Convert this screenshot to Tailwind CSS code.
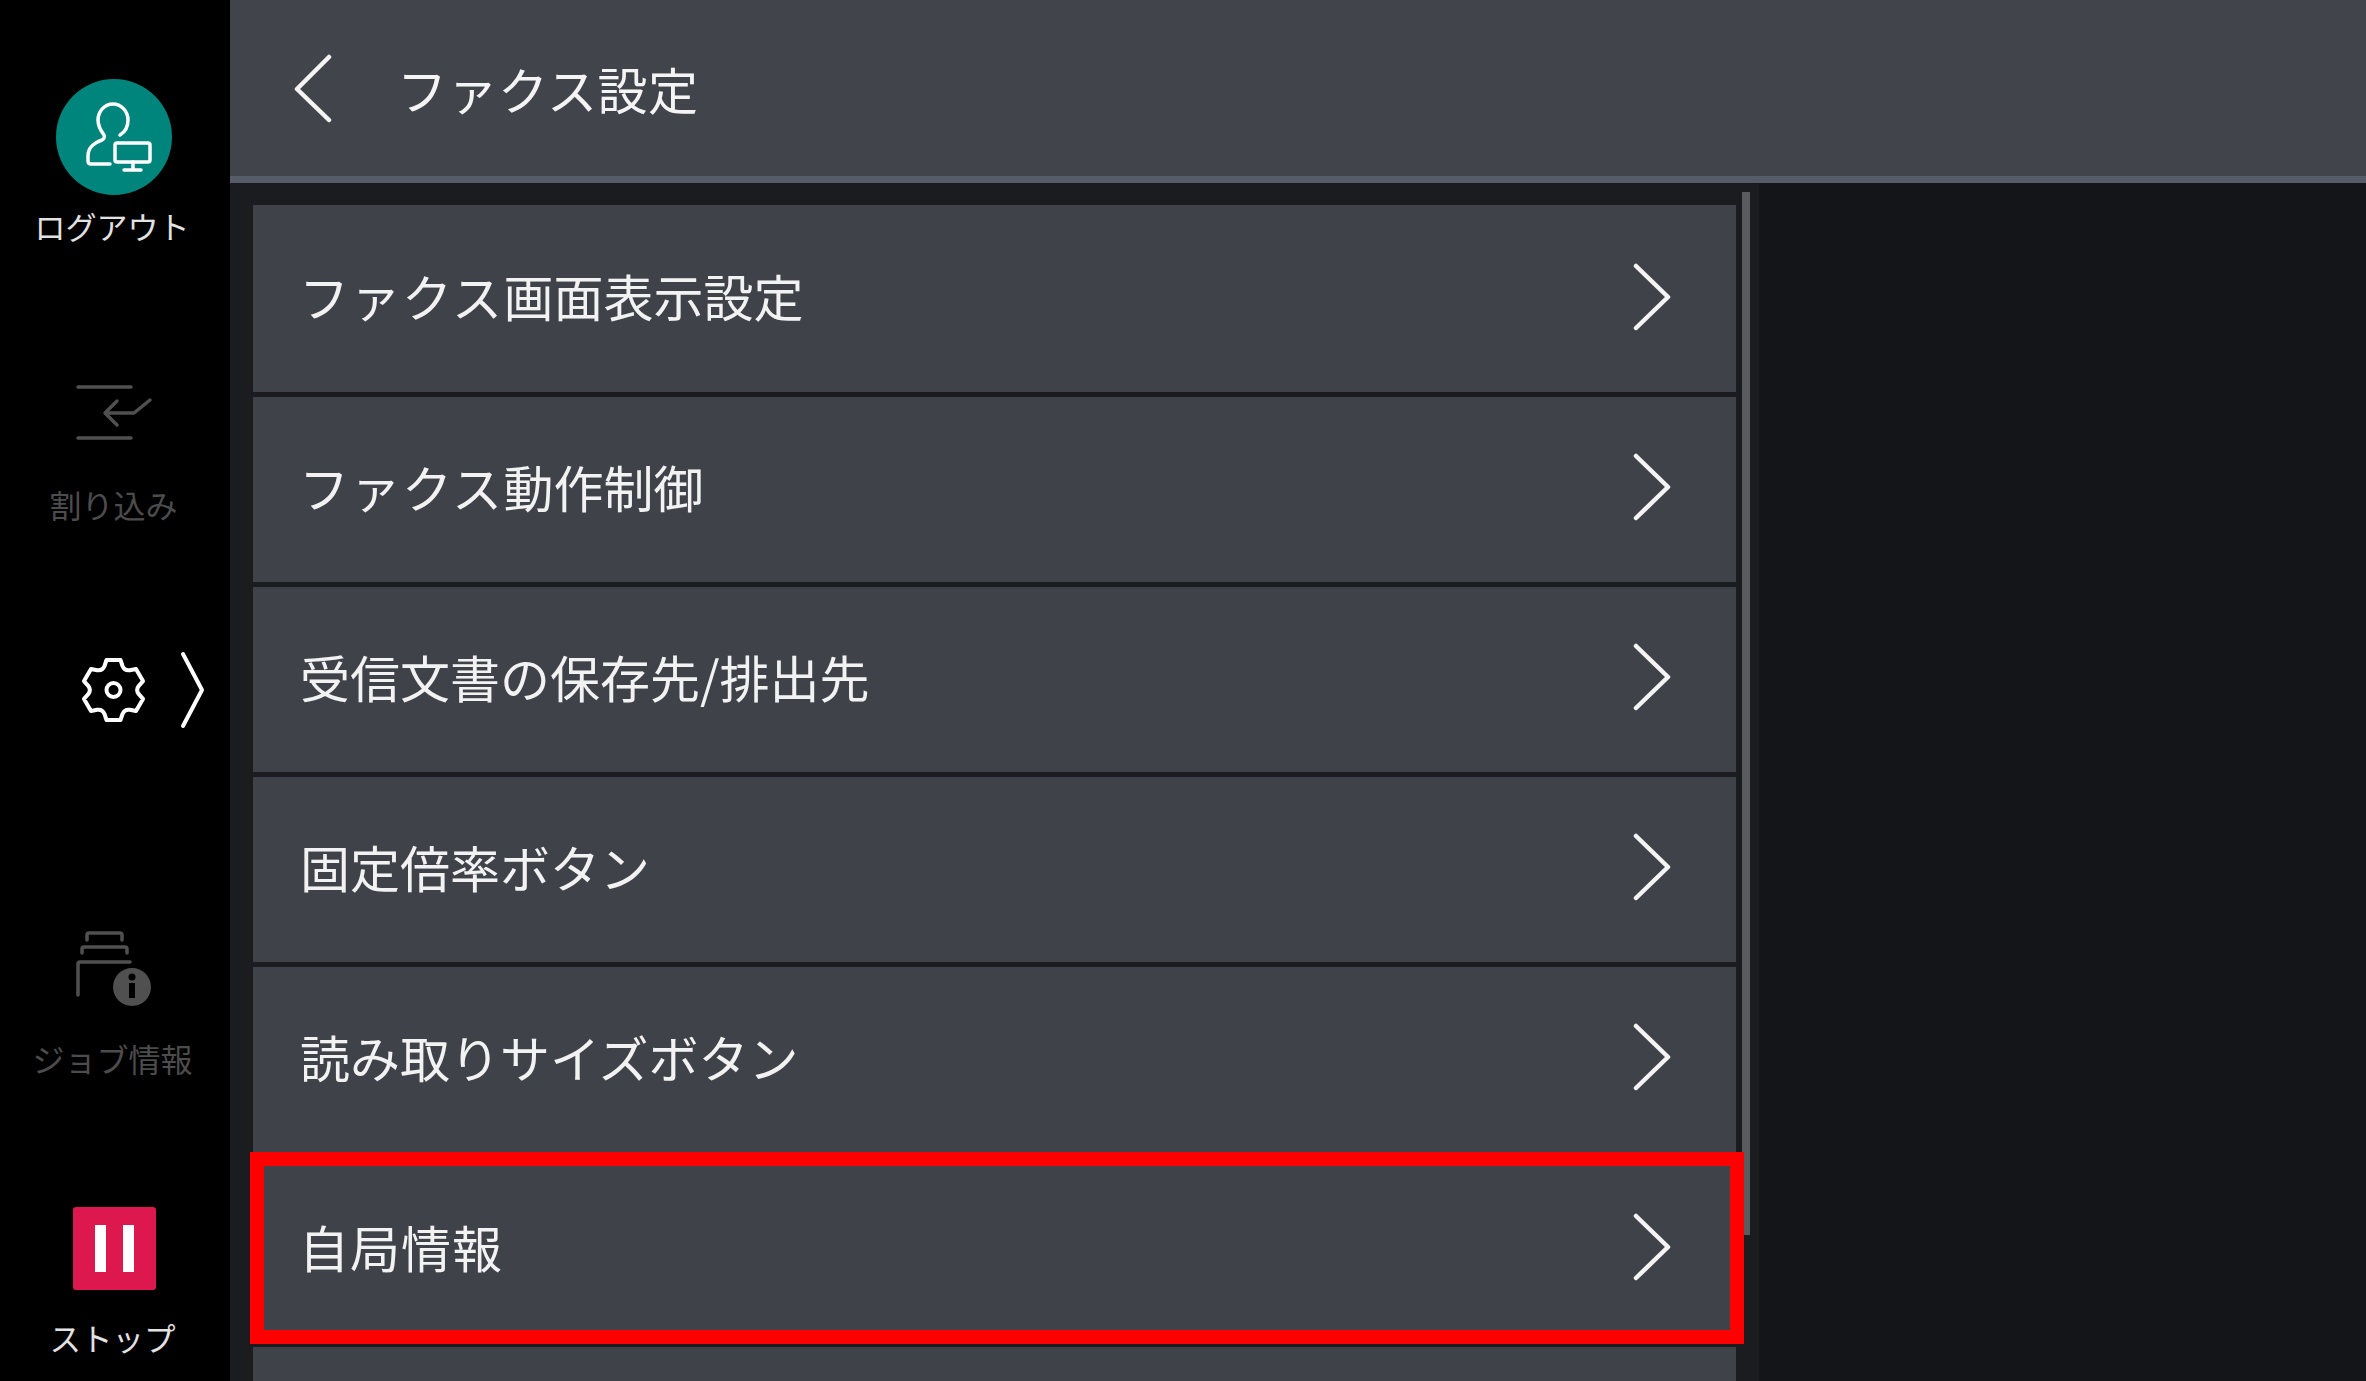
<!DOCTYPE html>
<html lang="ja">
<head>
<meta charset="utf-8">
<script src="https://cdn.jsdelivr.net/npm/@tailwindcss/browser@4"></script>
</head>
<body class="m-0 overflow-hidden bg-black">
<div class="relative flex h-[1381px] w-[2366px] overflow-hidden font-['Noto_Sans_CJK_JP','Noto_Sans',sans-serif]">

  <nav class="flex w-[230px] shrink-0 flex-col items-center bg-black pt-[79px] pr-[2px] text-[31px] leading-[40px]">
    <svg class="h-[116px] w-[116px] shrink-0" viewBox="56 79 116 116" fill="none" stroke="#fff" stroke-width="3.5" stroke-linecap="round" stroke-linejoin="round">
      <circle cx="114" cy="137" r="58" fill="#00857d" stroke="none"/>
      <path d="M120 135c5-3 8-9 8-15 0-9-7-16-15-16s-15 7-15 16c0 6 3 11 6 15 1 2 0 4-2 5-8 3-14 7-14 16v5c0 2 1 3 3 3h19"/>
      <rect x="115" y="143" width="35" height="19" rx="2"/>
      <path d="M133 162v8M124 170h17"/>
    </svg>
    <span class="mt-[11px] mr-[4px] text-[#e2e2e2]">ログアウト</span>

    <svg class="mt-[134px] h-[65px] w-[90px] shrink-0" viewBox="69 380 90 65" fill="none" stroke="#505050" stroke-width="3.5" stroke-linecap="round" stroke-linejoin="round">
      <path d="M78 387h53M78 438h53M150 400l-16 13h-29M117 401l-12 12 12 12"/>
    </svg>
    <span class="mt-[39px] mr-[1px] text-[32px] text-[#4c4c4c]">割り込み</span>

    <svg class="mt-[126px] h-[80px] w-[230px] shrink-0" viewBox="-1 650 230 80" fill="none" stroke="#fff" stroke-width="4" stroke-linecap="round" stroke-linejoin="round">
      <g transform="translate(113.5 690)">
        <path d="M-7 -30H7L9 -24Q11 -19 16.3 -19.8L22.5 -21L29.5 -8.9L25.3 -4.2Q22 0 25.3 4.2L29.5 8.9L22.5 21L16.3 19.8Q11 19 9 24L7 30H-7L-9 24Q-11 19 -16.3 19.8L-22.5 21L-29.5 8.9L-25.3 4.2Q-22 0 -25.3 -4.2L-29.5 -8.9L-22.5 -21L-16.3 -19.8Q-11 -19 -9 -24Z"/>
        <circle r="7"/>
      </g>
      <path d="M183 654l19 36-19 36"/>
    </svg>

    <svg class="mt-[195px] h-[85px] w-[90px] shrink-0" viewBox="69 925 90 85" fill="none" stroke="#505050" stroke-width="3.5" stroke-linecap="round" stroke-linejoin="round">
      <path d="M87 940v-5q0-2 2-2h31q2 0 2 2v5M82 953v-4q0-2 2-2h41q2 0 2 2v4M78 995v-31q0-2 2-2h50"/>
      <circle cx="132" cy="987" r="19" fill="#505050" stroke="none"/>
      <circle cx="132" cy="977" r="3.5" fill="#000" stroke="none"/>
      <rect x="129" y="983" width="6" height="15" fill="#000" stroke="none"/>
    </svg>
    <span class="mt-[28px] mr-[3px] text-[32px] text-[#4c4c4c]">ジョブ情報</span>

    <div class="mt-[129px] flex h-[83px] w-[83px] shrink-0 items-center justify-center gap-[17px] rounded-[3px] bg-[#dc184e]">
      <span class="h-[47px] w-[11px] bg-white"></span>
      <span class="h-[47px] w-[11px] bg-white"></span>
    </div>
    <span class="mt-[27px] mr-[3px] text-[31.5px] text-[#e2e2e2]">ストップ</span>
  </nav>

  <main class="flex min-w-0 flex-1 flex-col">
    <header class="flex h-[183px] shrink-0 items-center border-b-[7px] border-[#565c6a] bg-[#42444b]">
      <svg class="ml-[64px] h-[69px] w-[38px]" viewBox="294 53 38 69" fill="none" stroke="#f4f4f4" stroke-width="4.5" stroke-linecap="round" stroke-linejoin="round">
        <path d="M329 56L297 88L329 119"/>
      </svg>
      <h1 class="ml-[65px] text-[50px] leading-none font-normal tracking-[0.5px] text-[#f4f4f4]">ファクス設定</h1>
    </header>

    <div class="flex min-h-0 flex-1">
      <div class="flex w-[1529px] shrink-0 flex-col gap-[5px] overflow-hidden bg-[#1b1c1f] pt-[22px] pl-[23px]">
        <div class="flex h-[187px] w-[1483px] shrink-0 items-center justify-between bg-[#404249] pr-[65px] pl-[46px] text-[50px] text-[#f2f2f2]"><span class="mb-[6px]"><span class="tracking-[1.5px]">ファクス</span>画面表示設定</span><svg class="mb-[4px] h-[68px] w-[38px]" viewBox="0 0 38 68" fill="none" stroke="#f4f4f4" stroke-width="4.5" stroke-linecap="round" stroke-linejoin="round"><path d="M3 3L35 34L3 65"/></svg></div>
        <div class="flex h-[185px] w-[1483px] shrink-0 items-center justify-between bg-[#404249] pr-[65px] pl-[46px] text-[50px] text-[#f2f2f2]"><span class="mb-[6px]"><span class="tracking-[1.5px]">ファクス</span>動作制御</span><svg class="mb-[6px] h-[68px] w-[38px]" viewBox="0 0 38 68" fill="none" stroke="#f4f4f4" stroke-width="4.5" stroke-linecap="round" stroke-linejoin="round"><path d="M3 3L35 34L3 65"/></svg></div>
        <div class="flex h-[185px] w-[1483px] shrink-0 items-center justify-between bg-[#404249] pr-[65px] pl-[46px] text-[50px] text-[#f2f2f2]"><span class="mb-[6px] ml-[1px]">受信文書の保存先/排出先</span><svg class="mb-[6px] h-[68px] w-[38px]" viewBox="0 0 38 68" fill="none" stroke="#f4f4f4" stroke-width="4.5" stroke-linecap="round" stroke-linejoin="round"><path d="M3 3L35 34L3 65"/></svg></div>
        <div class="flex h-[185px] w-[1483px] shrink-0 items-center justify-between bg-[#404249] pr-[65px] pl-[46px] text-[50px] text-[#f2f2f2]"><span class="mb-[6px] ml-[1px]">固定倍率ボタン</span><svg class="mb-[6px] h-[68px] w-[38px]" viewBox="0 0 38 68" fill="none" stroke="#f4f4f4" stroke-width="4.5" stroke-linecap="round" stroke-linejoin="round"><path d="M3 3L35 34L3 65"/></svg></div>
        <div class="flex h-[185px] w-[1483px] shrink-0 items-center justify-between bg-[#404249] pr-[65px] pl-[46px] text-[50px] text-[#f2f2f2]"><span class="mb-[6px] ml-[1px]">読み取りサイズボタン</span><svg class="mb-[6px] h-[68px] w-[38px]" viewBox="0 0 38 68" fill="none" stroke="#f4f4f4" stroke-width="4.5" stroke-linecap="round" stroke-linejoin="round"><path d="M3 3L35 34L3 65"/></svg></div>
        <div class="flex h-[185px] w-[1483px] shrink-0 items-center justify-between bg-[#404249] pr-[65px] pl-[46px] text-[50px] text-[#f2f2f2]"><span class="mb-[6px] tracking-[1px]">自局情報</span><svg class="mb-[6px] h-[68px] w-[38px]" viewBox="0 0 38 68" fill="none" stroke="#f4f4f4" stroke-width="4.5" stroke-linecap="round" stroke-linejoin="round"><path d="M3 3L35 34L3 65"/></svg></div>
        <div class="h-[185px] w-[1483px] shrink-0 bg-[#404249]"></div>
      </div>
      <div class="flex-1 bg-[#141518]"></div>
    </div>
  </main>

  <div class="absolute top-[192px] left-[1742px] h-[1043px] w-[8px] bg-[#5a5b5e]"></div>
  <div class="absolute top-[1152px] left-[250px] h-[192px] w-[1494px] border-[14px] border-[#ff0000]"></div>
</div>
</body>
</html>
